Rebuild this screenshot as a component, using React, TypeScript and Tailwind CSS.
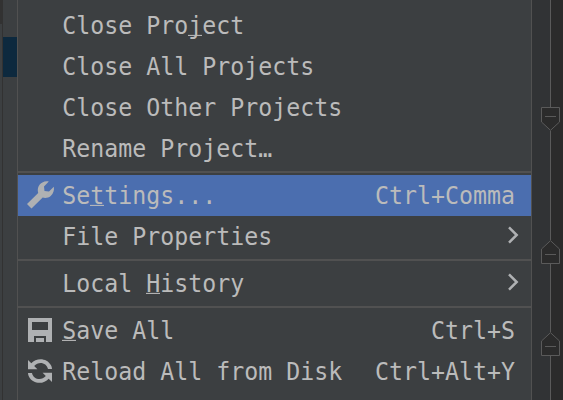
import type { ReactNode } from "react";

function Row({ icon, children, shortcut, active = false, submenu = false }: {
  icon?: ReactNode;
  children: ReactNode;
  shortcut?: string;
  active?: boolean;
  submenu?: boolean;
}) {
  return (
    <div className={`flex h-[41px] shrink-0 items-center pb-px ${active ? "bg-[#4b6eaf]" : ""}`}>
      <span className="flex w-[44.25px] shrink-0 pl-2">{icon}</span>
      <span className="flex-1 origin-bottom translate-y-px scale-y-[1.04] whitespace-pre">{children}</span>
      {shortcut && <span className="origin-bottom translate-y-px scale-y-[1.04] pr-4">{shortcut}</span>}
      {submenu && (
        <svg className="mr-3" width="12" height="20" viewBox="0 0 12 20" fill="none" stroke="#afb1b3" strokeWidth="2.5">
          <path d="M2 1.3 9.7 9 2 16.7" />
        </svg>
      )}
    </div>
  );
}

function Separator() {
  return (
    <div className="h-[6px] shrink-0 py-[2px]">
      <div className="h-[2px] bg-[#515151]" />
    </div>
  );
}

function Mnemonic({ children }: { children: string }) {
  return (
    <span className="inline-block h-[22px] border-b border-[#bbbbbb] align-top leading-[24px]">{children}</span>
  );
}

function Wrench() {
  return (
    <svg width="30" height="30" viewBox="0 0 30 30" fill="#afb1b3">
      <path d="M1 24 12.2 13C11 8.5 12.6 4.5 16.4 2.5 18.4 1.4 20.7 1 22.8 1.6L18 6.5 18.5 11 23 11.5 27.8 6.7C28.5 9.7 27.4 13.6 24.7 16 22.3 18 19.2 18.4 16.7 17.6L5.5 28.5Z" />
    </svg>
  );
}

function Disk() {
  return (
    <svg className="ml-[2px]" width="24" height="24" viewBox="0 0 24 24" fill="#afb1b3">
      <path fillRule="evenodd" d="M0 0H24V24H18V18H6V24H0ZM4 4V12H20V4Z" />
      <path d="M8 20H16V24H8Z" />
    </svg>
  );
}

function Reload() {
  return (
    <svg className="ml-[2px]" width="24" height="24" viewBox="0 0 24 24" fill="#afb1b3">
      <path d="M0 1 3.3 4.3C8.5-1.8 19-1.2 23 6.2 23.6 7.4 24 8.7 24 10H20C18.7 3.5 10.5 1.8 6.2 7L9.4 10.2H0Z" />
      <path d="M24 23 20.7 19.7C15.5 25.8 5 25.2 1 17.8.4 16.6 0 15.3 0 14H4C5.3 20.5 13.5 22.2 17.8 17L14.6 13.8H24Z" />
    </svg>
  );
}

function FoldMarker({ up = false }: { up?: boolean }) {
  return (
    <svg className="block shrink-0" width="19" height="24" viewBox="0 0 19 24" fill="#2b2b2b" stroke="#5a5a5a">
      <path d={up ? "M.5 23.5V9L9.5.7 18.5 9V23.5Z" : "M.5.5H18.5V15L9.5 23.3.5 15Z"} />
      <path d={up ? "M4 14.5H15" : "M4 9.5H15"} />
    </svg>
  );
}

export default function App() {
  return (
    <div className="flex h-[400px] w-[563px] overflow-hidden bg-[#3c3f41]">
      <div className="w-[2px]">
        <div className="h-[24px] bg-[#323232]" />
      </div>
      <div className="w-px bg-[#323232]" />
      <div className="w-[14px] pt-[37px]">
        <div className="h-[40px] bg-[#0d293e]" />
      </div>
      <div className="flex w-[515px] flex-col border-x border-[#515151] pt-[5px] font-['DejaVu_Sans_Mono',monospace] text-[23.25px] leading-[24px] text-[#bbbbbb]">
        <Row>
          Close Pro<Mnemonic>j</Mnemonic>ect
        </Row>
        <Row>Close All Projects</Row>
        <Row>Close Other Projects</Row>
        <Row>Rename Project…</Row>
        <Separator />
        <Row icon={<Wrench />} shortcut="Ctrl+Comma" active>
          Se<Mnemonic>t</Mnemonic>tings...
        </Row>
        <Row submenu>File Properties</Row>
        <Separator />
        <Row submenu>
          Local <Mnemonic>H</Mnemonic>istory
        </Row>
        <Separator />
        <Row icon={<Disk />} shortcut="Ctrl+S">
          <Mnemonic>S</Mnemonic>ave All
        </Row>
        <Row icon={<Reload />} shortcut="Ctrl+Alt+Y">Reload All from Disk</Row>
      </div>
      <div className="flex w-[31px] bg-linear-to-r from-[#313335] from-[18px] to-[#2b2b2b] to-[18px]">
        <div className="ml-[9px] flex w-[19px] flex-col items-center">
          <div className="h-[107px] w-px shrink-0 bg-[#5a5a5a]" />
          <FoldMarker />
          <div className="h-[109px] w-px shrink-0 bg-[#5a5a5a]" />
          <FoldMarker up />
          <div className="h-[68px] w-px shrink-0 bg-[#5a5a5a]" />
          <FoldMarker up />
          <div className="w-px flex-1 bg-[#5a5a5a]" />
        </div>
      </div>
    </div>
  );
}
